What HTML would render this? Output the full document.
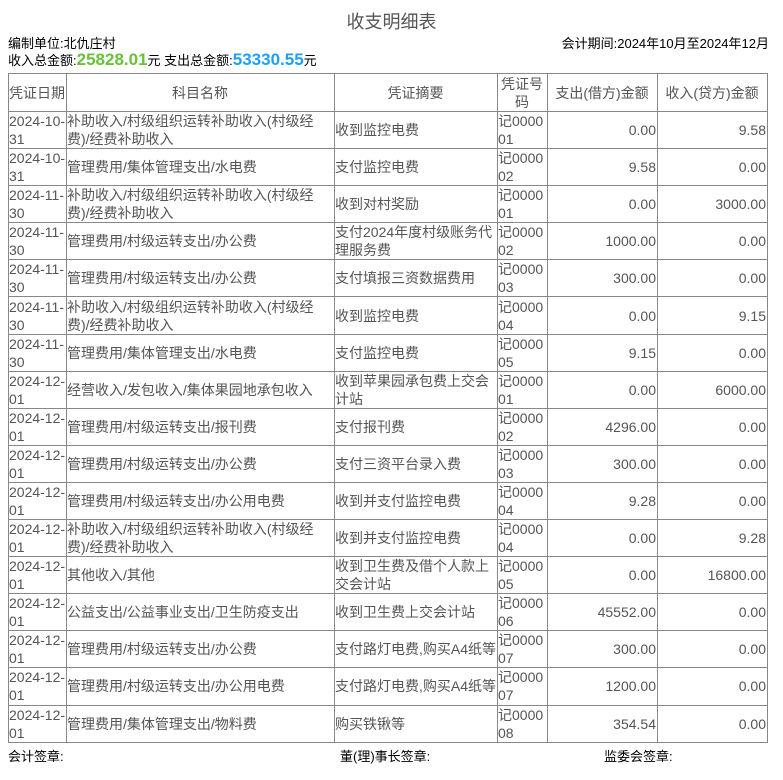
<!DOCTYPE html>
<html><head><meta charset="utf-8"><style>
body{margin:0;background:#fff;font-family:"Liberation Sans","Noto Sans CJK SC",sans-serif;color:#000;width:783px;height:780px;overflow:hidden;position:relative}
.t{position:absolute;left:0;width:783px;top:8px;text-align:center;font-size:18px;color:#555}
.l1{position:absolute;left:8px;top:33px;font-size:13px}
.r1{position:absolute;right:14px;top:33px;font-size:13px}
.l2{position:absolute;left:8px;top:50px;font-size:13px}
.g{color:#67c23a;font-weight:bold;font-size:17px}
.b{color:#1e9fff;font-weight:bold;font-size:17px}
table{position:absolute;left:8px;top:73px;border-collapse:collapse;table-layout:fixed;width:760px;font-size:14px;color:#555}
td,th{border:1px solid #888;padding:0 1px 0 0;line-height:18px;font-weight:normal;overflow:hidden;word-break:break-all}
td:first-child{white-space:nowrap;padding:0}
th{height:37px;text-align:center}
td{height:36.1px}
.n{text-align:right}
.f{position:absolute;top:746px;font-size:13px}
</style></head><body>
<div class="t">收支明细表</div>
<div class="l1">编制单位:北仇庄村</div>
<div class="r1">会计期间:2024年10月至2024年12月</div>
<div class="l2">收入总金额:<span class="g">25828.01</span>元 支出总金额:<span class="b">53330.55</span>元</div>
<table>
<colgroup><col style="width:58px"><col style="width:268px"><col style="width:163px"><col style="width:50px"><col style="width:110px"><col style="width:110px"></colgroup>
<tr><th>凭证日期</th><th>科目名称</th><th>凭证摘要</th><th>凭证号码</th><th>支出(借方)金额</th><th>收入(贷方)金额</th></tr>
<tr><td>2024-10-<br>31</td><td>补助收入/村级组织运转补助收入(村级经费)/经费补助收入</td><td>收到监控电费</td><td>记000001</td><td class="n">0.00</td><td class="n">9.58</td></tr>
<tr><td>2024-10-<br>31</td><td>管理费用/集体管理支出/水电费</td><td>支付监控电费</td><td>记000002</td><td class="n">9.58</td><td class="n">0.00</td></tr>
<tr><td>2024-11-<br>30</td><td>补助收入/村级组织运转补助收入(村级经费)/经费补助收入</td><td>收到对村奖励</td><td>记000001</td><td class="n">0.00</td><td class="n">3000.00</td></tr>
<tr><td>2024-11-<br>30</td><td>管理费用/村级运转支出/办公费</td><td>支付2024年度村级账务代理服务费</td><td>记000002</td><td class="n">1000.00</td><td class="n">0.00</td></tr>
<tr><td>2024-11-<br>30</td><td>管理费用/村级运转支出/办公费</td><td>支付填报三资数据费用</td><td>记000003</td><td class="n">300.00</td><td class="n">0.00</td></tr>
<tr><td>2024-11-<br>30</td><td>补助收入/村级组织运转补助收入(村级经费)/经费补助收入</td><td>收到监控电费</td><td>记000004</td><td class="n">0.00</td><td class="n">9.15</td></tr>
<tr><td>2024-11-<br>30</td><td>管理费用/集体管理支出/水电费</td><td>支付监控电费</td><td>记000005</td><td class="n">9.15</td><td class="n">0.00</td></tr>
<tr><td>2024-12-<br>01</td><td>经营收入/发包收入/集体果园地承包收入</td><td>收到苹果园承包费上交会计站</td><td>记000001</td><td class="n">0.00</td><td class="n">6000.00</td></tr>
<tr><td>2024-12-<br>01</td><td>管理费用/村级运转支出/报刊费</td><td>支付报刊费</td><td>记000002</td><td class="n">4296.00</td><td class="n">0.00</td></tr>
<tr><td>2024-12-<br>01</td><td>管理费用/村级运转支出/办公费</td><td>支付三资平台录入费</td><td>记000003</td><td class="n">300.00</td><td class="n">0.00</td></tr>
<tr><td>2024-12-<br>01</td><td>管理费用/村级运转支出/办公用电费</td><td>收到并支付监控电费</td><td>记000004</td><td class="n">9.28</td><td class="n">0.00</td></tr>
<tr><td>2024-12-<br>01</td><td>补助收入/村级组织运转补助收入(村级经费)/经费补助收入</td><td>收到并支付监控电费</td><td>记000004</td><td class="n">0.00</td><td class="n">9.28</td></tr>
<tr><td>2024-12-<br>01</td><td>其他收入/其他</td><td>收到卫生费及借个人款上交会计站</td><td>记000005</td><td class="n">0.00</td><td class="n">16800.00</td></tr>
<tr><td>2024-12-<br>01</td><td>公益支出/公益事业支出/卫生防疫支出</td><td>收到卫生费上交会计站</td><td>记000006</td><td class="n">45552.00</td><td class="n">0.00</td></tr>
<tr><td>2024-12-<br>01</td><td>管理费用/村级运转支出/办公费</td><td>支付路灯电费,购买A4纸等</td><td>记000007</td><td class="n">300.00</td><td class="n">0.00</td></tr>
<tr><td>2024-12-<br>01</td><td>管理费用/村级运转支出/办公用电费</td><td>支付路灯电费,购买A4纸等</td><td>记000007</td><td class="n">1200.00</td><td class="n">0.00</td></tr>
<tr><td>2024-12-<br>01</td><td>管理费用/集体管理支出/物料费</td><td>购买铁锹等</td><td>记000008</td><td class="n">354.54</td><td class="n">0.00</td></tr>
</table>
<div class="f" style="left:8px">会计签章:</div>
<div class="f" style="left:340px">董(理)事长签章:</div>
<div class="f" style="left:604px">监委会签章:</div>
</body></html>
